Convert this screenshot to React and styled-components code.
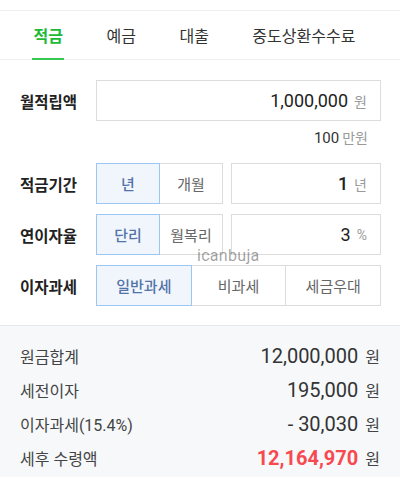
import styled, { createGlobalStyle } from "styled-components";

const GlobalStyle = createGlobalStyle`
  body {
    margin: 0;
    background: #fff;
    font-family: Roboto, "Noto Sans CJK KR", sans-serif;
    color: #222;
  }
`;

const tabs = ["적금", "예금", "대출", "중도상환수수료"];

const results = [
  { label: "원금합계", value: "12,000,000" },
  { label: "세전이자", value: "195,000" },
  { label: "이자과세(15.4%)", value: "- 30,030" },
  { label: "세후 수령액", value: "12,164,970", highlight: true },
];

const App = () => {
  return (
    <Wrapper>
      <GlobalStyle />
      <TabBar>
        {tabs.map((t, i) => (
          <Tab key={t} $active={i === 0}>
            {t}
          </Tab>
        ))}
      </TabBar>

      <Form>
        <Row>
          <Label>월적립액</Label>
          <InputBox>
            <Value>1,000,000</Value>
            <Unit>원</Unit>
          </InputBox>
        </Row>
        <Hint>
          100<HintUnit>만원</HintUnit>
        </Hint>

        <Row $mt={16}>
          <Label>적금기간</Label>
          <Controls>
            <SegGroup $width={127}>
              <Seg $active>년</Seg>
              <Seg>개월</Seg>
            </SegGroup>
            <InputBox $ml={8}>
              <Value $bold>1</Value>
              <Unit>년</Unit>
            </InputBox>
          </Controls>
        </Row>

        <Row $mt={10}>
          <Label>연이자율</Label>
          <Controls>
            <SegGroup $width={127}>
              <Seg $active>단리</Seg>
              <Seg>월복리</Seg>
            </SegGroup>
            <InputBox $ml={8}>
              <Value>3</Value>
              <Unit>%</Unit>
            </InputBox>
          </Controls>
        </Row>

        <Row $mt={10}>
          <Label>이자과세</Label>
          <SegGroup>
            <Seg $active>일반과세</Seg>
            <Seg>비과세</Seg>
            <Seg>세금우대</Seg>
          </SegGroup>
        </Row>

        <Watermark>icanbuja</Watermark>
      </Form>

      <Result>
        {results.map((r) => (
          <ResultRow key={r.label}>
            <ResultLabel>{r.label}</ResultLabel>
            <ResultValue $highlight={r.highlight}>{r.value}</ResultValue>
            <ResultUnit>원</ResultUnit>
          </ResultRow>
        ))}
      </Result>
    </Wrapper>
  );
};

const Wrapper = styled.div`
  padding-top: 10px;
  min-height: 467px;
  display: flex;
  flex-direction: column;
`;

const TabBar = styled.nav`
  box-sizing: border-box;
  height: 50px;
  display: flex;
  gap: 40.5px;
  padding-left: 32px;
  border-top: 1px solid #edf0f0;
  border-bottom: 1px solid #edf0f0;
`;

const Tab = styled.div`
  display: flex;
  align-items: center;
  padding: 1px 1.5px 0;
  margin-bottom: -1px;
  font-size: 16px;
  font-weight: ${(p) => (p.$active ? 700 : 400)};
  color: ${(p) => (p.$active ? "#1dba37" : "#333")};
  border-bottom: 2px solid ${(p) => (p.$active ? "#36c84f" : "transparent")};
`;

const Form = styled.section`
  position: relative;
  padding: 20px 19px 19px 20px;
`;

const Row = styled.div`
  display: grid;
  grid-template-columns: 76px 1fr;
  align-items: center;
  height: 41px;
  margin-top: ${(p) => p.$mt || 0}px;
`;

const Label = styled.div`
  font-size: 15.5px;
  font-weight: 700;
  color: #222;
`;

const Controls = styled.div`
  display: flex;
  height: 100%;
`;

const InputBox = styled.div`
  box-sizing: border-box;
  flex: 1;
  height: 41px;
  display: flex;
  align-items: center;
  justify-content: flex-end;
  gap: 6px;
  padding-right: 13px;
  margin-left: ${(p) => p.$ml || 0}px;
  border: 1px solid #dcdcdc;
  background: #fff;
`;

const Value = styled.span`
  font-size: 18px;
  font-weight: ${(p) => (p.$bold ? 500 : 400)};
  color: #222;
`;

const Unit = styled.span`
  font-size: 14px;
  color: #9a9a9a;
`;

const Hint = styled.div`
  text-align: right;
  padding-right: 13px;
  margin-top: 8px;
  font-size: 15px;
  color: #333;
  line-height: 18px;
`;

const HintUnit = styled.span`
  margin-left: 3px;
  font-size: 14px;
  color: #9a9a9a;
`;

const SegGroup = styled.div`
  display: flex;
  height: 41px;
  width: ${(p) => (p.$width ? `${p.$width}px` : "auto")};
`;

const Seg = styled.div`
  box-sizing: border-box;
  flex: 1;
  display: flex;
  align-items: center;
  justify-content: center;
  font-size: 15px;
  font-weight: ${(p) => (p.$active ? 500 : 400)};
  color: ${(p) => (p.$active ? "#5374a9" : "#666")};
  background: ${(p) => (p.$active ? "#f1f6fc" : "#fff")};
  border: 1px solid ${(p) => (p.$active ? "#9cc6f4" : "#dcdcdc")};
  position: relative;
  z-index: ${(p) => (p.$active ? 1 : 0)};
  & + & {
    margin-left: -1px;
  }
`;

const Watermark = styled.div`
  position: absolute;
  left: 197px;
  top: 186px;
  font-size: 16px;
  letter-spacing: 0.3px;
  color: rgba(0, 0, 0, 0.38);
  pointer-events: none;
`;

const Result = styled.section`
  flex: 1;
  background: #f6f8fa;
  border-top: 1px solid #e5e9ed;
  padding: 13px 20px 8px;
`;

const ResultRow = styled.div`
  display: flex;
  align-items: center;
  height: 34px;
`;

const ResultLabel = styled.div`
  flex: 1;
  font-size: 16px;
  color: #444;
`;

const ResultValue = styled.div`
  font-size: 20px;
  font-weight: ${(p) => (p.$highlight ? 700 : 400)};
  color: ${(p) => (p.$highlight ? "#f64a50" : "#333")};
`;

const ResultUnit = styled.div`
  margin-left: 7px;
  font-size: 16px;
  color: #444;
`;

export default App;
